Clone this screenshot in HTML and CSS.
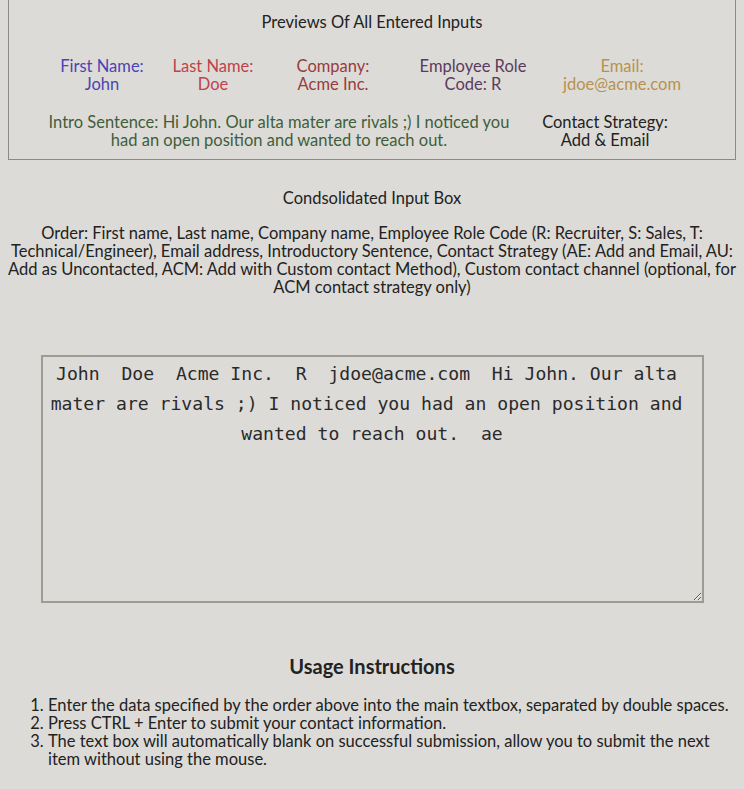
FILE: index.html
```html
<!DOCTYPE html>
<html>
<head>
<meta charset="utf-8">
<link rel="stylesheet" href="styles.css">
</head>
<body>
<section class="previews">
  <div class="title">Previews Of All Entered Inputs</div>
  <div class="fields">
    <div class="field first">First Name:<br>John</div>
    <div class="field last">Last Name:<br>Doe</div>
    <div class="field company">Company:<br>Acme Inc.</div>
    <div class="field role">Employee Role Code: R</div>
    <div class="field email">Email:<br>jdoe@acme.com</div>
  </div>
  <div class="fields2">
    <div class="field intro">Intro Sentence: Hi John. Our alta mater are rivals ;) I noticed you had an open position and wanted to reach out.</div>
    <div class="field strategy">Contact Strategy:<br>Add &amp; Email</div>
  </div>
</section>
<section class="consolidated">
  <div class="subtitle">Condsolidated Input Box</div>
  <p class="order">Order: First name, Last name, Company name, Employee Role Code (R: Recruiter, S: Sales, T: Technical/Engineer), Email address, Introductory Sentence, Contact Strategy (AE: Add and Email, AU: Add as Uncontacted, ACM: Add with Custom contact Method), Custom contact channel (optional, for ACM contact strategy only)</p>
  <textarea class="input">John  Doe  Acme Inc.  R  jdoe@acme.com  Hi John. Our alta mater are rivals ;) I noticed you had an open position and wanted to reach out.  ae</textarea>
</section>
<section class="usage">
  <h3>Usage Instructions</h3>
  <ol>
    <li>Enter the data specified by the order above into the main textbox, separated by double spaces.</li>
    <li>Press CTRL + Enter to submit your contact information.</li>
    <li>The text box will automatically blank on successful submission, allow you to submit the next item without using the mouse.</li>
  </ol>
</section>
</body>
</html>
```
FILE: styles.css
```css
html, body {
  background: #dddbd7;
}
body {
  margin: 0 8px;
  font-family: Lato, "Liberation Sans", sans-serif;
  font-size: 16.5px;
  line-height: 18px;
  color: #222;
}
.previews {
  border: 1px solid #8c8a86;
  border-top: none;
  padding: 13px 0 10px;
}
.title {
  text-align: center;
}
.fields {
  display: grid;
  grid-template-columns: 116px 106px 134px 146px 152px;
  margin: 26px 0 0 35px;
}
.fields2 {
  display: grid;
  grid-template-columns: 470px 182px;
  margin: 20px 0 0 35px;
}
.field {
  text-align: center;
}
.first { color: #4a45b2; }
.last { color: #c0424c; }
.company { color: #983c3c; }
.role { color: #5a3b5c; }
.email { color: #b8924c; }
.intro { color: #3f5e3b; }
.strategy { color: #222; }

.consolidated {
  text-align: center;
  padding-top: 29px;
}
.order {
  margin: 17px 0 0;
}
.input {
  display: block;
  box-sizing: border-box;
  width: 663px;
  height: 248px;
  margin: 59px auto 0;
  padding: 2px;
  border: 2px solid #9e9a94;
  background: #dddbd7;
  color: #2a2a2a;
  font-family: "DejaVu Sans Mono", monospace;
  font-size: 18.1px;
  line-height: 30px;
  text-align: center;
  white-space: break-spaces;
}
.usage h3 {
  text-align: center;
  font-size: 20px;
  line-height: 22px;
  margin: 52px 0 0;
}
.usage ol {
  margin: 19px 0 0;
  padding-left: 40px;
}
```
